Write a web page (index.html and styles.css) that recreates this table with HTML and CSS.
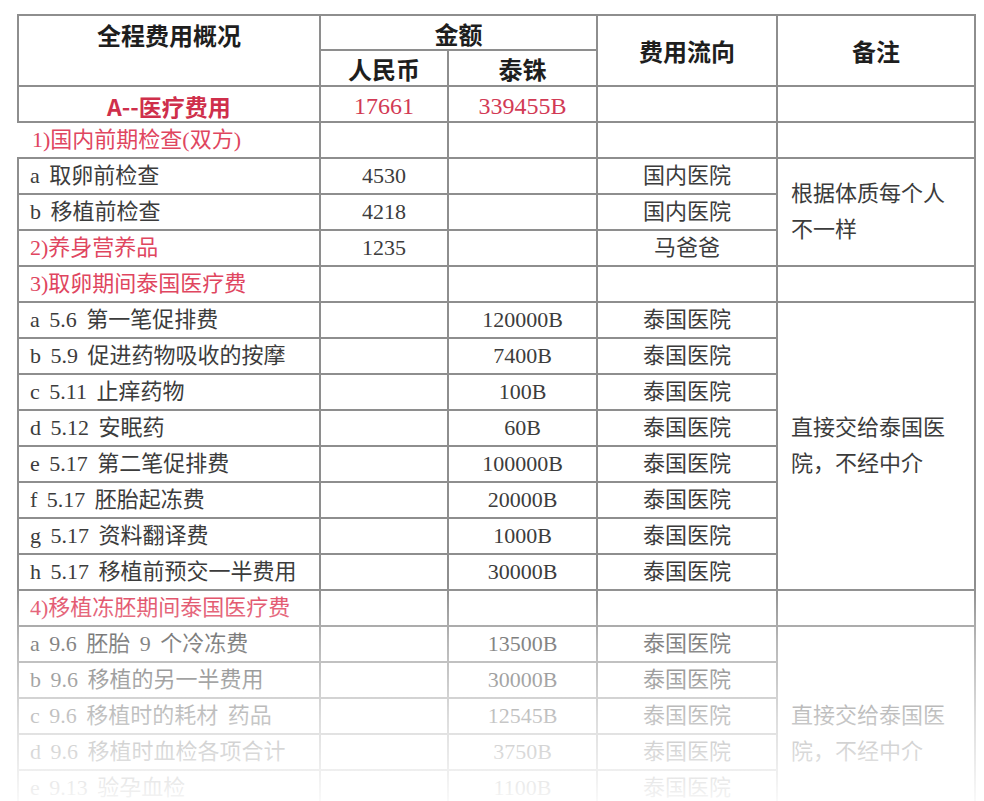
FILE: index.html
```html
<!DOCTYPE html>
<html lang="zh-CN">
<head>
<meta charset="utf-8">
<title>全程费用概况</title>
<link rel="stylesheet" href="styles.css">
</head>
<body>
<div class="page">
  <div class="sheet">
    <div class="c hd top rs2">全程费用概况</div>
    <div class="c hd cs2">金额</div>
    <div class="c hd mid rs2">费用流向</div>
    <div class="c hd mid rs2">备注</div>
    <div class="c hd">人民币</div>
    <div class="c hd">泰铢</div>

    <div class="c total-label">A--医疗费用</div>
    <div class="c num red">17661</div>
    <div class="c num red">339455B</div>
    <div class="c"></div>
    <div class="c"></div>

    <div class="c item sub noleft">1)国内前期检查(双方)</div>
    <div class="c"></div>
    <div class="c"></div>
    <div class="c"></div>
    <div class="c"></div>

    <div class="c item">a 取卵前检查</div>
    <div class="c num">4530</div>
    <div class="c"></div>
    <div class="c ctr">国内医院</div>
    <div class="c note rs3"><span class="note-text">根据体质每个人不一样</span></div>

    <div class="c item">b 移植前检查</div>
    <div class="c num">4218</div>
    <div class="c"></div>
    <div class="c ctr">国内医院</div>

    <div class="c item sub">2)养身营养品</div>
    <div class="c num">1235</div>
    <div class="c"></div>
    <div class="c ctr">马爸爸</div>

    <div class="c item sub">3)取卵期间泰国医疗费</div>
    <div class="c"></div>
    <div class="c"></div>
    <div class="c"></div>
    <div class="c"></div>

    <div class="c item">a 5.6 第一笔促排费</div>
    <div class="c"></div>
    <div class="c num">120000B</div>
    <div class="c ctr">泰国医院</div>
    <div class="c note rs8"><span class="note-text">直接交给泰国医院，不经中介</span></div>

    <div class="c item">b 5.9 促进药物吸收的按摩</div>
    <div class="c"></div>
    <div class="c num">7400B</div>
    <div class="c ctr">泰国医院</div>

    <div class="c item">c 5.11 止痒药物</div>
    <div class="c"></div>
    <div class="c num">100B</div>
    <div class="c ctr">泰国医院</div>

    <div class="c item">d 5.12 安眠药</div>
    <div class="c"></div>
    <div class="c num">60B</div>
    <div class="c ctr">泰国医院</div>

    <div class="c item">e 5.17 第二笔促排费</div>
    <div class="c"></div>
    <div class="c num">100000B</div>
    <div class="c ctr">泰国医院</div>

    <div class="c item">f 5.17 胚胎起冻费</div>
    <div class="c"></div>
    <div class="c num">20000B</div>
    <div class="c ctr">泰国医院</div>

    <div class="c item">g 5.17 资料翻译费</div>
    <div class="c"></div>
    <div class="c num">1000B</div>
    <div class="c ctr">泰国医院</div>

    <div class="c item">h 5.17 移植前预交一半费用</div>
    <div class="c"></div>
    <div class="c num">30000B</div>
    <div class="c ctr">泰国医院</div>

    <div class="c item sub">4)移植冻胚期间泰国医疗费</div>
    <div class="c"></div>
    <div class="c"></div>
    <div class="c"></div>
    <div class="c"></div>

    <div class="c item">a 9.6 胚胎 9 个冷冻费</div>
    <div class="c"></div>
    <div class="c num">13500B</div>
    <div class="c ctr">泰国医院</div>
    <div class="c note rs6"><span class="note-text">直接交给泰国医院，不经中介</span></div>

    <div class="c item">b 9.6 移植的另一半费用</div>
    <div class="c"></div>
    <div class="c num">30000B</div>
    <div class="c ctr">泰国医院</div>

    <div class="c item">c 9.6 移植时的耗材 药品</div>
    <div class="c"></div>
    <div class="c num">12545B</div>
    <div class="c ctr">泰国医院</div>

    <div class="c item">d 9.6 移植时血检各项合计</div>
    <div class="c"></div>
    <div class="c num">3750B</div>
    <div class="c ctr">泰国医院</div>

    <div class="c item">e 9.13 验孕血检</div>
    <div class="c"></div>
    <div class="c num">1100B</div>
    <div class="c ctr">泰国医院</div>

    <div class="c item"></div>
    <div class="c"></div>
    <div class="c"></div>
    <div class="c"></div>
  </div>
  <div class="fade"></div>
</div>
</body>
</html>
```

FILE: styles.css
```css
html, body {
  margin: 0;
  padding: 0;
  background: #ffffff;
  overflow: hidden;
}

.page {
  position: relative;
  width: 984px;
  height: 801px;
  overflow: hidden;
  padding: 14px 0 0 17px;
  box-sizing: border-box;
}

.sheet {
  display: grid;
  grid-template-columns: 300px 126px 147px 178px 196px;
  grid-template-rows: 33px 34px;
  grid-auto-rows: 34px;
  gap: 2px;
  padding: 2px;
  width: max-content;
  background: #8e8e8e;
  font-family: "Liberation Serif", "Noto Sans CJK SC", serif;
  font-size: 22px;
  color: #3c3c3c;
}

.c {
  background: #ffffff;
  display: flex;
  align-items: center;
  justify-content: center;
  white-space: nowrap;
  line-height: 34px;
}

.rs2 { grid-row: span 2; }
.rs3 { grid-row: span 3; }
.rs6 { grid-row: span 6; }
.rs8 { grid-row: span 8; }
.cs2 { grid-column: span 2; }

.hd {
  font-family: "Noto Sans CJK SC", sans-serif;
  font-weight: 700;
  font-size: 24px;
  color: #1e1e1e;
  padding-top: 2px;
}

.hd.top {
  align-items: flex-start;
}

.hd.mid {
  padding-top: 0;
}

.total-label {
  font-family: "Noto Sans CJK SC", sans-serif;
  font-weight: 700;
  font-size: 23px;
  color: #cf2f4b;
  padding-top: 3px;
}

.num {
  font-family: "Liberation Serif", serif;
  font-size: 22px;
  color: #3c3c3c;
}

.num.red {
  font-size: 24px;
  color: #d23a55;
  padding-top: 3px;
}

.item {
  justify-content: flex-start;
  padding-left: 11px;
  word-spacing: 4px;
}

.sub {
  color: #e0465f;
  word-spacing: 0;
}

.noleft {
  margin-left: -2px;
  padding-left: 15px;
}

.ctr {
  color: #3c3c3c;
}

.note {
  justify-content: flex-start;
  align-items: center;
  padding-left: 13px;
  white-space: normal;
}

.note-text {
  display: block;
  width: 7em;
  line-height: 36px;
}

.fade {
  position: absolute;
  left: 0;
  right: 0;
  top: 585px;
  bottom: 0;
  background: linear-gradient(to bottom,
    rgba(255, 255, 255, 0) 0%,
    rgba(255, 255, 255, 0.35) 25%,
    rgba(255, 255, 255, 0.7) 62%,
    rgba(255, 255, 255, 0.95) 100%);
  pointer-events: none;
}
```
